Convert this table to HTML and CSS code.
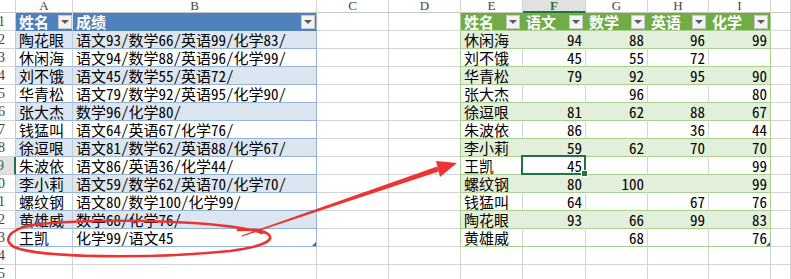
FILE: index.html
```html
<!DOCTYPE html>
<html lang="zh-CN">
<head>
<meta charset="utf-8">
<title>Sheet</title>
<link rel="stylesheet" href="styles.css">
</head>
<body>
<div class="sheet">
  <!-- column letters -->
  <div class="ch corner"></div>
  <div class="ch">A</div><div class="ch">B</div><div class="ch">C</div><div class="ch">D</div>
  <div class="ch">E</div><div class="ch chsel">F</div><div class="ch">G</div><div class="ch">H</div><div class="ch">I</div><div class="ch"></div>

  <!-- row 1 -->
  <div class="c rh">1</div>
  <div class="c hl hla"><span>姓名</span><i class="fb"></i></div>
  <div class="c hl hlb"><span>成绩</span><i class="fb"></i></div>
  <div class="c"></div><div class="c rl"></div>
  <div class="c hr"><span>姓名</span><i class="fb"></i></div>
  <div class="c hr"><span>语文</span><i class="fb"></i></div>
  <div class="c hr"><span>数学</span><i class="fb"></i></div>
  <div class="c hr"><span>英语</span><i class="fb"></i></div>
  <div class="c hr rr"><span>化学</span><i class="fb"></i></div>
  <div class="c"></div>

  <!-- row 2 -->
  <div class="c rh">2</div>
  <div class="c lt lb la">陶花眼</div><div class="c lt lb lr">语文93/数学66/英语99/化学83/</div>
  <div class="c"></div><div class="c rl"></div>
  <div class="c rt rb">休闲海</div><div class="c rt rb num">94</div><div class="c rt rb num">88</div><div class="c rt rb num">96</div><div class="c rt rb num rr">99</div>
  <div class="c"></div>

  <!-- row 3 -->
  <div class="c rh">3</div>
  <div class="c lt la">休闲海</div><div class="c lt lr">语文94/数学88/英语96/化学99/</div>
  <div class="c"></div><div class="c rl"></div>
  <div class="c rt">刘不饿</div><div class="c rt num">45</div><div class="c rt num">55</div><div class="c rt num">72</div><div class="c rt num rr"></div>
  <div class="c"></div>

  <!-- row 4 -->
  <div class="c rh">4</div>
  <div class="c lt lb la">刘不饿</div><div class="c lt lb lr">语文45/数学55/英语72/</div>
  <div class="c"></div><div class="c rl"></div>
  <div class="c rt rb">华青松</div><div class="c rt rb num">79</div><div class="c rt rb num">92</div><div class="c rt rb num">95</div><div class="c rt rb num rr">90</div>
  <div class="c"></div>

  <!-- row 5 -->
  <div class="c rh">5</div>
  <div class="c lt la">华青松</div><div class="c lt lr">语文79/数学92/英语95/化学90/</div>
  <div class="c"></div><div class="c rl"></div>
  <div class="c rt">张大杰</div><div class="c rt num"></div><div class="c rt num">96</div><div class="c rt num"></div><div class="c rt num rr">80</div>
  <div class="c"></div>

  <!-- row 6 -->
  <div class="c rh">6</div>
  <div class="c lt lb la">张大杰</div><div class="c lt lb lr">数学96/化学80/</div>
  <div class="c"></div><div class="c rl"></div>
  <div class="c rt rb">徐逗哏</div><div class="c rt rb num">81</div><div class="c rt rb num">62</div><div class="c rt rb num">88</div><div class="c rt rb num rr">67</div>
  <div class="c"></div>

  <!-- row 7 -->
  <div class="c rh">7</div>
  <div class="c lt la">钱猛叫</div><div class="c lt lr">语文64/英语67/化学76/</div>
  <div class="c"></div><div class="c rl"></div>
  <div class="c rt">朱波依</div><div class="c rt num">86</div><div class="c rt num"></div><div class="c rt num">36</div><div class="c rt num rr">44</div>
  <div class="c"></div>

  <!-- row 8 -->
  <div class="c rh">8</div>
  <div class="c lt lb la">徐逗哏</div><div class="c lt lb lr">语文81/数学62/英语88/化学67/</div>
  <div class="c"></div><div class="c rl"></div>
  <div class="c rt rb">李小莉</div><div class="c rt rb num">59</div><div class="c rt rb num">62</div><div class="c rt rb num">70</div><div class="c rt rb num rr">70</div>
  <div class="c"></div>

  <!-- row 9 -->
  <div class="c rh rhsel">9</div>
  <div class="c lt la">朱波依</div><div class="c lt lr">语文86/英语36/化学44/</div>
  <div class="c"></div><div class="c rl"></div>
  <div class="c rt">王凯</div><div class="c rt num sel">45</div><div class="c rt num"></div><div class="c rt num"></div><div class="c rt num rr">99</div>
  <div class="c"></div>

  <!-- row 10 -->
  <div class="c rh">10</div>
  <div class="c lt lb la">李小莉</div><div class="c lt lb lr">语文59/数学62/英语70/化学70/</div>
  <div class="c"></div><div class="c rl"></div>
  <div class="c rt rb">螺纹钢</div><div class="c rt rb num">80</div><div class="c rt rb num">100</div><div class="c rt rb num"></div><div class="c rt rb num rr">99</div>
  <div class="c"></div>

  <!-- row 11 -->
  <div class="c rh">11</div>
  <div class="c lt la">螺纹钢</div><div class="c lt lr">语文80/数学100/化学99/</div>
  <div class="c"></div><div class="c rl"></div>
  <div class="c rt">钱猛叫</div><div class="c rt num">64</div><div class="c rt num"></div><div class="c rt num">67</div><div class="c rt num rr">76</div>
  <div class="c"></div>

  <!-- row 12 -->
  <div class="c rh">12</div>
  <div class="c lt lb la">黄雄威</div><div class="c lt lb lr">数学68/化学76/</div>
  <div class="c"></div><div class="c rl"></div>
  <div class="c rt rb">陶花眼</div><div class="c rt rb num">93</div><div class="c rt rb num">66</div><div class="c rt rb num">99</div><div class="c rt rb num rr">83</div>
  <div class="c"></div>

  <!-- row 13 -->
  <div class="c rh">13</div>
  <div class="c lt la">王凯</div><div class="c lt lr thl">化学99/语文45</div>
  <div class="c"></div><div class="c rl"></div>
  <div class="c rt">黄雄威</div><div class="c rt num"></div><div class="c rt num">68</div><div class="c rt num"></div><div class="c rt num rr thr">76</div>
  <div class="c"></div>

  <!-- row 14 -->
  <div class="c rh">14</div>
  <div class="c"></div><div class="c"></div><div class="c"></div><div class="c"></div><div class="c"></div>
  <div class="c"></div><div class="c"></div><div class="c"></div><div class="c"></div><div class="c"></div>

  <!-- row 15 -->
  <div class="c rh">15</div>
  <div class="c"></div><div class="c"></div><div class="c"></div><div class="c"></div><div class="c"></div>
  <div class="c"></div><div class="c"></div><div class="c"></div><div class="c"></div><div class="c"></div>
</div>

<svg class="marks" width="791" height="279" viewBox="0 0 791 279" aria-hidden="true">
  <path d="M262 233 C 230 222, 120 217, 40 224 C 8 228, 2 240, 14 247 C 40 258, 150 259, 230 251 C 262 247, 276 240, 268 234 C 262 230, 250 229, 238 230"
        fill="none" stroke="#ec3434" stroke-width="2.6" stroke-linecap="round"/>
  <polygon points="242,236.6 241.6,235.4 437.2,166.6 438.8,171.4" fill="#ec3434"/>
  <polygon points="457,163 440,177 436,161" fill="#ec3434"/>
</svg>
</body>
</html>
```

FILE: styles.css
```css
html, body {
  margin: 0;
  padding: 0;
  background: #ffffff;
}

body {
  position: relative;
  width: 791px;
  height: 279px;
  overflow: hidden;
  font-family: "Noto Sans CJK SC", "Noto Sans", sans-serif;
}

.sheet {
  display: grid;
  grid-template-columns: 16px 57px 244px 72px 72px 62px 63px 62px 61px 62px 1fr;
  grid-template-rows: 13px;
  grid-auto-rows: 18px;
  width: 791px;
}

/* column letters */
.ch {
  box-sizing: border-box;
  border-right: 1px solid #d4d4d4;
  border-bottom: 1px solid #c6c6c6;
  font-family: "Liberation Serif", serif;
  font-size: 13px;
  line-height: 12px;
  color: #444444;
  text-align: center;
  overflow: hidden;
}

.corner {
  background: #ffffff;
}

.chsel {
  background: #e1e1e1;
  color: #217346;
  font-weight: bold;
  border-bottom: 2px solid #217346;
}

/* cells */
.c {
  box-sizing: border-box;
  border-right: 1px solid #d4d4d4;
  border-bottom: 1px solid #d4d4d4;
  font-size: 15px;
  line-height: 17px;
  color: #000000;
  padding: 0 3px;
  white-space: nowrap;
  overflow: hidden;
  font-feature-settings: "hwid" 1;
}

.rh {
  display: flex;
  justify-content: flex-end;
  padding: 0 10px 0 0;
  font-family: "Liberation Serif", serif;
  font-size: 14px;
  color: #444444;
  border-right-color: #c6c6c6;
}

.rhsel {
  background: #e1e1e1;
  color: #217346;
  border-right: 2px solid #217346;
}

/* left (blue) table */
.lt {
  border-bottom-color: #95b3d7;
}

.lb {
  background: #dce6f1;
}

.la {
  border-right-color: #b8cce4;
}

.lr {
  border-right-color: #95b3d7;
}

.hl {
  background: #4f81bd;
  color: #ffffff;
  font-weight: bold;
  display: flex;
  align-items: center;
  justify-content: space-between;
  padding: 0 0 0 3px;
  border-bottom-color: #4f81bd;
}

.hla {
  border-right-color: #dce6f1;
}

.hlb {
  border-right-color: #95b3d7;
  padding-right: 1px;
}

/* right (green) table */
.rt {
  border-bottom-color: #a9d08e;
}

.rb {
  background: #e2efda;
  border-right-color: #e2efda;
}

.hr {
  background: #70ad47;
  color: #ffffff;
  font-weight: bold;
  display: flex;
  align-items: center;
  justify-content: space-between;
  padding: 0 2px 0 3px;
  border-right-color: #70ad47;
  border-bottom-color: #a9d08e;
}

.rl {
  border-right-color: #a9d08e;
}

.rr {
  border-right-color: #a9d08e;
}

.num {
  text-align: right;
}

/* filter buttons */
.fb {
  box-sizing: border-box;
  width: 14px;
  height: 14px;
  flex: none;
  background: #f3f3f3;
  border: 1px solid #c9c9c9;
  display: flex;
  align-items: center;
  justify-content: center;
}

.fb::before {
  content: "";
  width: 0;
  height: 0;
  border-left: 4px solid transparent;
  border-right: 4px solid transparent;
  border-top: 4px solid #5c5c5c;
  margin-top: 1px;
}

/* selected cell */
.sel {
  position: relative;
  overflow: visible;
}

.sel::after {
  content: "";
  position: absolute;
  left: -2px;
  top: -2px;
  right: -1px;
  bottom: -1px;
  border: 2px solid #217346;
}

.sel::before {
  content: "";
  position: absolute;
  right: -3px;
  bottom: -3px;
  width: 5px;
  height: 5px;
  background: #217346;
  border: 1px solid #ffffff;
  z-index: 2;
}

/* table resize handles */
.thl, .thr {
  position: relative;
}

.thl::after, .thr::after {
  content: "";
  position: absolute;
  right: 0;
  bottom: 0;
  width: 0;
  height: 0;
  border-left: 4px solid transparent;
  border-bottom: 4px solid #3d5fb8;
}

/* annotations */
.marks {
  position: absolute;
  left: 0;
  top: 0;
  pointer-events: none;
}
```
